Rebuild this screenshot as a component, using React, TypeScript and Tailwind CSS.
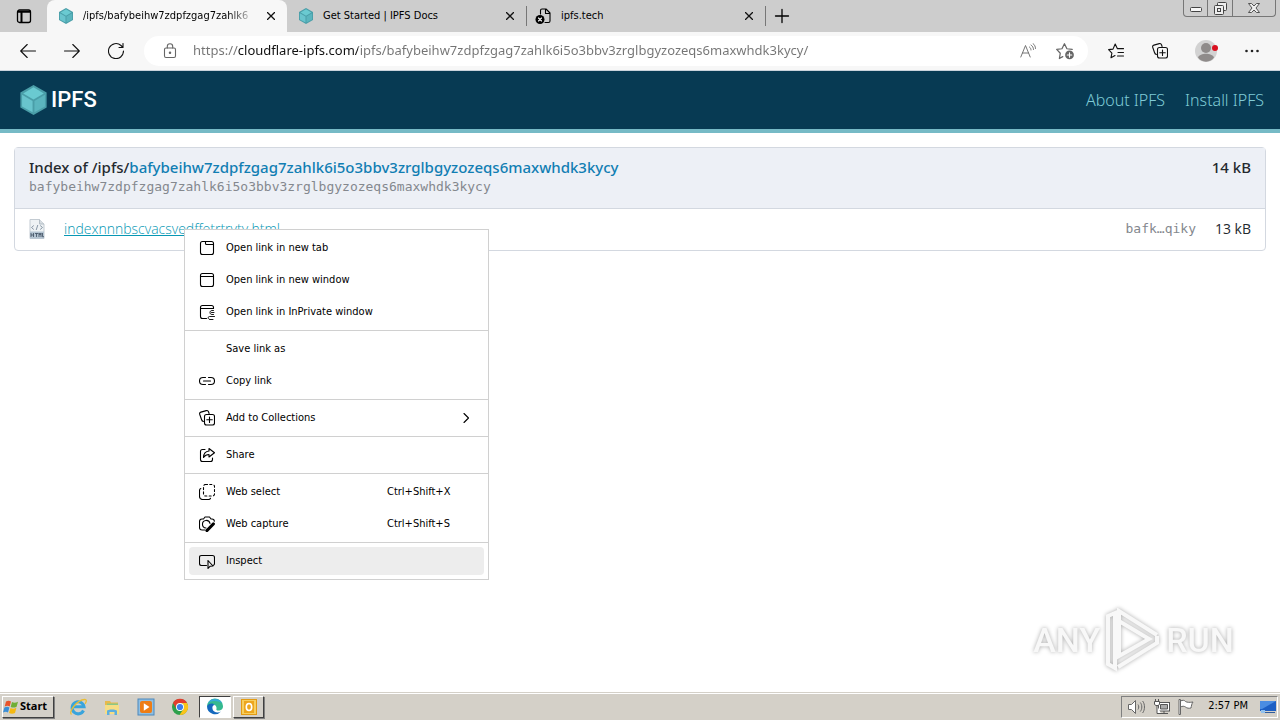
import type { ReactNode } from "react";

const UI = "font-['DejaVu_Sans_Condensed','Noto_Sans',sans-serif]";
const HASH = "bafybeihw7zdpfzgag7zahlk6i5o3bbv3zrglbgyzozeqs6maxwhdk3kycy";

function Icon({ children, size = "size-4" }: { children: ReactNode; size?: string }) {
  return (
    <svg viewBox="0 0 16 16" className={`${size} shrink-0`} fill="none" stroke="currentColor" strokeWidth="1.1" strokeLinecap="round" strokeLinejoin="round" aria-hidden="true">
      {children}
    </svg>
  );
}

function Cube({ className }: { className: string }) {
  return (
    <svg viewBox="0 0 28 32" className={`${className} shrink-0`} aria-hidden="true">
      <path d="M14 0 28 8v16L14 32 0 24V8z" fill="#4a9ea8" />
      <path d="M14 2.500 25 9 14 15.500 3 9z" fill="#6acad1" />
      <path d="M1.800 10.500 13 17v12L1.800 22.800z" fill="#69c4cd" />
      <path d="M26.200 10.500 15 17v12l11.200-6.200z" fill="#5bb5be" />
    </svg>
  );
}

function Collections({ size = "size-4" }: { size?: string }) {
  return (
    <Icon size={size}>
      <path d="M4.500 11.500c-1.200-.2-1.700-.9-2-2L.7 4.200c-.3-1 .2-1.800 1.200-2.100L7.300.6c1-.2 1.800.2 2.200 1.200l.6 1.700" />
      <rect x="5.500" y="4.500" width="10" height="10.500" rx="2" />
      <path d="M10.500 7v5.500M7.750 9.750h5.500" />
    </Icon>
  );
}

function CloseTab({ label }: { label: string }) {
  return (
    <button aria-label={label} className="flex size-4 shrink-0 items-center justify-center">
      <svg viewBox="0 0 8 8" className="size-2" stroke="#111" strokeWidth="1.300" aria-hidden="true"><path d="m0 0 8 8M8 0 0 8" /></svg>
    </button>
  );
}

function TabStrip() {
  return (
    <div className="flex h-8 bg-[#cdcdcd] text-[11px] text-black">
      <button aria-label="Tab actions" className="flex w-[47px] items-center justify-center">
        <Icon><rect x="1.500" y="2" width="13" height="12.500" rx="2" strokeWidth="1.300" /><path d="M2 3.800h12M5.500 4v10" strokeWidth="2" /></Icon>
      </button>
      <div role="tablist" className="flex">
        <div role="tab" aria-selected="true" className="flex w-60 items-center gap-2 rounded-t-lg bg-[#f7f7f7] pr-2 pl-2.5">
          <Cube className="h-4 w-[18px]" />
          <span className="min-w-0 flex-1 overflow-hidden whitespace-nowrap [mask-image:linear-gradient(to_right,black_85%,transparent)]">/ipfs/bafybeihw7zdpfzgag7zahlk6</span>
          <CloseTab label="Close tab" />
        </div>
        <div role="tab" aria-selected="false" className="flex w-[239px] items-center gap-2 pr-2 pl-2.5">
          <Cube className="h-4 w-[18px]" />
          <span className="flex-1">Get Started | IPFS Docs</span>
          <CloseTab label="Close tab" />
        </div>
        <div className="my-1.5 w-px bg-[#777]" />
        <div role="tab" aria-selected="false" className="flex w-[238px] items-center gap-2.5 pr-2 pl-2">
          <Icon>
            <path d="M5.500 6V2.500c0-1 .5-1.500 1.500-1.500h4l4 4v8c0 1-.5 1.500-1.500 1.500H10M10.500 1.500v4H15" />
            <circle cx="5" cy="11.500" r="4.500" fill="#000" stroke="none" />
            <path d="m3.500 10 3 3M6.500 10l-3 3" stroke="#fff" />
          </Icon>
          <span className="flex-1">ipfs.tech</span>
          <CloseTab label="Close tab" />
        </div>
        <div className="my-1.5 w-px bg-[#777]" />
      </div>
      <button aria-label="New tab" className="flex w-8 items-center justify-center">
        <Icon><path d="M8 1.500v13M1.500 8h13" strokeWidth="1.300" /></Icon>
      </button>
      <div className="mr-1 ml-auto flex h-[17px] divide-x divide-[#777] rounded-b border border-t-0 border-[#777] text-[#444]">
        <button aria-label="Minimize" className="flex w-6 items-end justify-center pb-1">
          <svg viewBox="0 0 12 5" className="h-[5px] w-3" aria-hidden="true"><rect x=".5" y=".5" width="11" height="4" rx="1" fill="#f7f7f7" stroke="currentColor" /></svg>
        </button>
        <button aria-label="Restore" className="flex w-[25px] items-center justify-center">
          <svg viewBox="0 0 13 13" className="size-[13px]" fill="#eee" stroke="currentColor" aria-hidden="true"><rect x="3.500" y=".5" width="9" height="8" rx="1" /><rect x=".5" y="3.500" width="9" height="9" rx="1" /><rect x="3.500" y="6.500" width="3" height="3" /></svg>
        </button>
        <button aria-label="Close" className="flex w-[42px] items-center justify-center">
          <svg viewBox="0 0 12 10" className="h-2.5 w-3" fill="#eee" stroke="currentColor" strokeWidth=".9" aria-hidden="true"><path d="M.5.5h3L6 3 8.500.5h3L8 5l3.500 4.500h-3L6 7 3.500 9.500h-3L4 5z" /></svg>
        </button>
      </div>
    </div>
  );
}

function Toolbar() {
  return (
    <div className="flex h-[39px] items-center border-b border-[#c9d3dc] bg-[#f7f7f7] pr-5 pl-5 text-[#111]">
      <div className="flex gap-7">
        <button aria-label="Back"><Icon><path d="M15.500 8H.7M7.200 1.500.7 8l6.500 6.500" /></Icon></button>
        <button aria-label="Forward"><Icon><path d="M.5 8h14.800M8.800 1.500 15.300 8l-6.500 6.500" /></Icon></button>
        <button aria-label="Refresh"><Icon><path d="M15.500 8A7.500 7.500 0 1 1 13 2.500l1.500 1.500M15 .5v4h-4" /></Icon></button>
      </div>
      <div className="ml-5 flex h-[30px] min-w-0 flex-1 items-center rounded-full bg-white pr-3.5 pl-[18px] text-[#666]">
        <Icon><rect x="2.500" y="5" width="11" height="9.500" rx="1.500" /><path d="M5.300 5V3.400a2.700 2.700 0 0 1 5.400 0V5" /><circle cx="8" cy="9.700" r=".7" fill="currentColor" /></Icon>
        <input
          aria-label="Address"
          defaultValue={`https://cloudflare-ipfs.com/ipfs/${HASH}/`}
          className="ml-[15px] min-w-0 flex-1 bg-[linear-gradient(to_right,#747474_45px,#111_45px,#111_165px,#747474_165px)] bg-clip-text font-['Noto_Sans',sans-serif] text-[13px] text-transparent outline-none"
        />
        <div className="flex gap-5">
          <button aria-label="Read aloud"><Icon><path d="m.8 14 4.700-11.500L10.200 14M2.500 10h6M9.500 4c1 .8 1.500 1.800 1.500 3M11 2c1.500 1 2.500 2.500 2.500 4.500M13 .5c1.600 1.300 2.500 3 2.500 5" strokeWidth=".9" /></Icon></button>
          <button aria-label="Add to favorites">
            <Icon size="size-[18px]"><path d="m6 13-3 1.700.8-4.700L.6 6.600l4.700-.6L7.500 1.500 9.700 6l4.700.6" /><circle cx="12" cy="11.500" r="3.900" fill="#666" stroke="none" /><path d="M12 9.500v4M10 11.500h4" stroke="#fff" strokeWidth="1" /></Icon>
          </button>
        </div>
      </div>
      <div className="ml-5 flex items-center">
        <button aria-label="Favorites"><Icon><path d="m7 12.500-4 2.200.9-4.600L.6 6.600l4.400-.5L7.200 1l2.100 4.600h6.200M10 9.500h5.500M9.500 13h6" /></Icon></button>
        <button aria-label="Collections" className="ml-7"><Collections /></button>
        <button aria-label="Profile" className="ml-[26px]">
          <svg viewBox="0 0 24 24" className="size-6" aria-hidden="true">
            <circle cx="12" cy="12" r="11" fill="#d2d2d2" /><circle cx="12" cy="9" r="5" fill="#8f8b8a" /><path d="M4 18.500c2-5 14-5 16 0-3 5.500-13 5.500-16 0z" fill="#8f8b8a" />
            <circle cx="21" cy="9" r="3" fill="#d9101f" />
          </svg>
        </button>
        <button aria-label="Settings and more" className="ml-[26px]">
          <svg viewBox="0 0 16 16" className="size-4" fill="#222" aria-hidden="true"><circle cx="2.500" cy="8" r="1.300" /><circle cx="8" cy="8" r="1.300" /><circle cx="13.500" cy="8" r="1.300" /></svg>
        </button>
      </div>
    </div>
  );
}

const groups: { label: string; keys?: string; more?: boolean; active?: boolean; icon: ReactNode }[][] = [
  [
    { label: "Open link in new tab", icon: <Icon><rect x="1.500" y="1.500" width="13" height="13" rx="2" /><path d="M6.500 1.500v2c0 .7.300 1 1 1h7" /></Icon> },
    { label: "Open link in new window", icon: <Icon><rect x="1.500" y="1.500" width="13" height="13" rx="2" /><path d="M1.500 4.500h13" /></Icon> },
    { label: "Open link in InPrivate window", icon: <Icon><path d="M7.500 14.500h-4c-1.300 0-2-.7-2-2v-9c0-1.300.7-2 2-2h9c1.300 0 2 .7 2 2v1M1.500 4.500h13" /><path d="M14.500 6.500h-1.500c-2.700 0-2.700 4 0 4h1.500M12.500 8.500H15M15.500 12.500h-5c-2 0-1.700 3 .5 3h3" strokeWidth=".9" /></Icon> },
  ],
  [
    { label: "Save link as", icon: <span className="size-4 shrink-0" /> },
    { label: "Copy link", icon: <Icon><path d="M6.500 4.500H4a3.500 3.500 0 0 0 0 7h2.500M9.500 4.500H12a3.500 3.500 0 0 1 0 7H9.500M4.500 8h7" /></Icon> },
  ],
  [{ label: "Add to Collections", more: true, icon: <Collections /> }],
  [{ label: "Share", icon: <Icon><path d="M6 2.500H3.500c-1.300 0-2 .7-2 2v8c0 1.300.7 2 2 2h8c1.300 0 2-.7 2-2V11M10 1.500l5.500 4.200L10 10V7.500c-2.500 0-4 .7-5.500 3 .1-4 2-6.200 5.500-6.500z" /></Icon> }],
  [
    { label: "Web select", keys: "Ctrl+Shift+X", icon: <Icon><path d="M1.800 4.500c-.8.300-1.300 1-1.300 2v6c0 1.900 1.100 3 3 3h6c1 0 1.700-.5 2-1.300" /><rect x="4.500" y=".5" width="11" height="11.500" rx="2" strokeDasharray="2 2.300" /></Icon> },
    { label: "Web capture", keys: "Ctrl+Shift+S", icon: <Icon><path d="M6 14H3c-1.500 0-2.500-1-2.500-2.500v-6C.5 4 1.500 3 3 3h1.500L6 1h4.500L12 3h1c1.500 0 2.300.8 2.300 2.300M11 7.500A3.800 3.800 0 1 0 7 12" /><path d="M8 14.500 14.300 8" strokeWidth="3.200" /></Icon> },
  ],
  [{ label: "Inspect", active: true, icon: <Icon><path d="M7.500 12.500h-5c-1.300 0-2-.7-2-2v-6c0-1.300.7-2 2-2h11c1.300 0 2 .7 2 2v6c0 .8-.3 1.400-1 1.700M9 7.500v8l2-2.200 3-.3z" /></Icon> }],
];

function ContextMenu() {
  return (
    <div role="menu" className="absolute top-[229px] left-[184px] w-[305px] divide-y divide-[#d0d0d0] border border-[#d0d0d0] bg-white text-[11px] text-black">
      {groups.map((group) => (
        <div key={group[0].label} role="group" className="px-1 py-0.5">
          {group.map((item) => (
            <div key={item.label} className="py-0.5">
              <button role="menuitem" className={`flex h-7 w-full items-center rounded px-2.5 text-left ${item.active ? "bg-[#ededed]" : ""}`}>
                {item.icon}
                <span className="ml-[11px] flex-1">{item.label}</span>
                {item.keys && <span className="w-[87px]">{item.keys}</span>}
                {item.more && <Icon><path d="m6 3.500 4.500 4.500-4.500 4.500" /></Icon>}
              </button>
            </div>
          ))}
        </div>
      ))}
    </div>
  );
}

function Page() {
  return (
    <>
      <header className="flex h-[62px] items-center justify-between border-b-4 border-[#76bac6] bg-[#073a53] px-4 font-['Noto_Sans',sans-serif] font-light">
        <a href="#ipfs" className="flex items-center gap-1 pl-1 text-white">
          <Cube className="h-[30px] w-[27px]" />
          <span className="font-['Roboto',sans-serif] text-[22px] leading-7 font-medium">IPFS</span>
        </a>
        <nav className="flex gap-5 text-base text-[#7fcbd6]">
          <a href="#about">About IPFS</a>
          <a href="#install">Install IPFS</a>
        </nav>
      </header>
      <main className="flex-1 px-3.5 pt-3.5">
        <section className="rounded border border-[#d3d8e0] text-[#24292e]">
          <div className="flex h-[61px] justify-between border-b border-[#d3d8e0] bg-[#edf0f6] px-3.5 pt-[9px] font-['Noto_Sans',sans-serif] text-[15px] leading-5 font-medium">
            <div>
              <h1>Index of /ipfs/<a href="#root" className="text-[#117eb3]">{HASH}</a></h1>
              <div className="font-['DejaVu_Sans_Mono',monospace] text-[13px] font-normal text-[#84888e]">{HASH}</div>
            </div>
            <div>14 kB</div>
          </div>
          <table className="w-full">
            <tbody>
              <tr className="h-[41px] [&>td]:pb-0.5">
                <td className="w-[49px] pl-3.5">
                  <svg viewBox="0 0 16 20" className="h-5 w-4" aria-hidden="true">
                    <path d="M1 .5h9.500L15 5v14.500H1z" fill="#eef2f4" stroke="#c3cbd2" /><path d="M10.500.5V5H15" fill="#d7dde2" stroke="#b4bec6" />
                    <path d="m4.800 6.500-2.300 2 2.300 2M11.200 6.500l2.300 2-2.300 2M8.800 6l-1.600 5" fill="none" stroke="#8796a5" />
                    <rect x="1" y="12.500" width="14" height="7" fill="#b4c4d1" />
                    <path d="M2 14v4M4.500 14v4M2 16h2.500M6 14.500h3M7.500 14.500V18M10 18v-4l1 2 1-2v4M13.500 14v3.700h1.500" fill="none" stroke="#3c4d5e" strokeWidth=".8" />
                  </svg>
                </td>
                <td className="font-['Open_Sans','Noto_Sans',sans-serif] text-sm font-light text-[#0798b4]"><a href="#file" className="underline">indexnnnbscvacsvedffetrtrvty.html</a></td>
                <td className="text-right font-['DejaVu_Sans_Mono',monospace] text-[13px] text-[#84888e]">bafk…qiky</td>
                <td className="w-[69px] pr-3.5 text-right font-['Open_Sans','Noto_Sans',sans-serif] text-sm">13 kB</td>
              </tr>
            </tbody>
          </table>
        </section>
      </main>
    </>
  );
}

function Watermark() {
  return (
    <div aria-hidden="true" className="absolute right-[46px] bottom-12 flex items-center gap-1 font-['Roboto',sans-serif] text-[34px] leading-none font-medium text-[#f8f8f8] drop-shadow-[0_0_2px_#aaa]">
      <span>ANY</span>
      <svg viewBox="0 0 58 64" className="h-16 w-[58px]" fill="none" stroke="currentColor" strokeWidth="4">
        <path d="M4 8v48l7 4V5zM15 44V3l38 24" /><path d="M15 13v35l30-17z" /><path d="M14 59 53 35v-7" />
      </svg>
      <span>RUN</span>
    </div>
  );
}

function Taskbar() {
  const raised = "border border-t-white border-l-white border-r-[#404040] border-b-[#404040] shadow-[1px_1px_0_#808080]";
  return (
    <footer className="flex h-7 items-center border-t border-[#d4d0c8] bg-[#d4d0c8] pl-0.5 text-[11px] text-black shadow-[inset_0_1px_0_white]">
      <button className={`flex h-[22px] w-[52px] items-center gap-px font-['Noto_Sans',sans-serif] font-bold ${raised}`}>
        <svg viewBox="0 0 16 16" className="size-4" aria-hidden="true">
          <path d="M3 2.500c2-1.200 3.500-1 5 0L6.700 7.500c-1.500-1-3-1-5 0z" fill="#e8532b" /><path d="M9 3c1.700.9 3.500.9 6-.3l-1.400 5c-2 1-3.900 1.200-5.900.2z" fill="#6fae35" />
          <path d="M1.400 8.500c2-1 3.500-1 5 0L5 13.500c-1.500-1-3-1-5 0z" fill="#3a8ed6" /><path d="M7.500 9c1.800 1 3.700.9 5.900-.2L12 14c-2 1-4 1-6 0z" fill="#f5b912" />
        </svg>
        Start
      </button>
      <div className="ml-[15px] flex items-center">
        <button aria-label="Internet Explorer" className="flex w-[34px]">
          <svg viewBox="0 0 18 18" className="size-[18px]" fill="none" aria-hidden="true"><path d="M14.500 12.500A6 6 0 1 1 15 8.700H5" stroke="#39a4dc" strokeWidth="3" /><path d="M2.500 16.500C-1 14 8 2 15.500 1.500c3-.2 1.500 3 .5 4.500" stroke="#e9bd35" strokeWidth="1.300" /></svg>
        </button>
        <button aria-label="Explorer" className="flex w-[34px]">
          <svg viewBox="0 0 18 18" className="size-[18px]" aria-hidden="true"><path d="M2 3h5l1 1.500h7V15H2z" fill="#e7b94c" /><path d="M4 5.500h11v6H4z" fill="#8ac889" /><path d="M2 7h14v9H2z" fill="#f6dd84" /><path d="M4 17v-4c0-2 10-2 10 0v4h-2.500v-3h-5v3z" fill="#5caee0" /></svg>
        </button>
        <button aria-label="Media Player" className="flex w-[34px]">
          <svg viewBox="0 0 18 18" className="size-[18px]" aria-hidden="true"><rect x="1" y="1" width="16" height="16" fill="#8fbfe2" stroke="#4c87bb" /><rect x="3" y="3" width="12" height="12" rx="2" fill="#ee7d15" /><path d="M6.800 5.200 12.500 9l-5.700 3.800z" fill="#fff" /></svg>
        </button>
        <button aria-label="Chrome" className="flex w-7">
          <svg viewBox="0 0 18 18" className="size-[18px]" aria-hidden="true"><circle cx="9" cy="9" r="8" fill="#2da04c" /><path d="M2 5A8 8 0 0 1 16 5H9a4 4 0 0 0-3.500 6z" fill="#e23d2e" /><path d="M16 5a8 8 0 0 1-7.500 12l4-6A4 4 0 0 0 9 5z" fill="#fbc419" /><circle cx="9" cy="9" r="4" fill="#fff" /><circle cx="9" cy="9" r="3.100" fill="#3b7ded" /></svg>
        </button>
        <button aria-label="Edge" className="flex h-[22px] w-8 items-center justify-center border border-t-[#404040] border-r-white border-b-white border-l-[#404040] bg-white">
          <svg viewBox="0 0 18 18" className="size-[18px]" aria-hidden="true"><path d="M1 9a8 8 0 0 1 16-1c.2 3-2 4.500-4.500 4.500-2 0-2.500-.8-2-1.800C11 8 8 5.500 5 6.500 3 7 1.500 8 1 9z" fill="#35b98f" /><path d="M1 8.500C2 5 7 4.500 9 7c-2 0-3 1.500-2.500 4 .7 3 5 4.500 8.500 2.500A8 8 0 0 1 1 8.500z" fill="#1469bd" /><path d="M1.500 6A8 8 0 0 1 9 1c4 0 6 2 7.300 4C12 3 5 1.500 1.500 6z" fill="#36a9d8" /></svg>
        </button>
        <button aria-label="Outlook" className={`ml-0.5 flex h-[22px] w-[31px] items-center justify-center ${raised}`}>
          <svg viewBox="0 0 16 16" className="size-4" aria-hidden="true"><rect x=".5" y=".5" width="15" height="15" fill="#f7cf5e" stroke="#e39b12" /><rect x="3" y="2" width="10" height="12" fill="#eda61d" /><ellipse cx="8" cy="8" rx="2.700" ry="3.500" fill="none" stroke="#fff" strokeWidth="1.600" /></svg>
        </button>
      </div>
      <div className="mr-0.5 ml-auto flex h-[22px] items-center border border-t-[#808080] border-r-white border-b-white border-l-[#808080] pl-1.5">
        <svg viewBox="0 0 18 16" className="mr-2 h-4 w-[18px]" fill="#fff" stroke="#666" aria-hidden="true"><path d="M.5 5.500h3l4-4v13l-4-4h-3z" /><path d="M10 5.500c1 1.500 1 3.500 0 5M12.300 3.500c2 2.500 2 6.500 0 9M14.600 2c2.500 3 2.500 9 0 12" fill="none" /></svg>
        <svg viewBox="0 0 16 16" className="mr-2 size-4" fill="#fff" stroke="#555" aria-hidden="true"><rect x="4.500" y="3.500" width="11" height="8.500" /><path d="M6.500 5.500h7V10h-7z" fill="#aaa" /><path d="M.5 2.500h5v3l-1.500 1H2l-1.500-1zM1.500 0v2.500M4.500 0v2.500M3 6.500v8h4M7 14.500h7M10 12v2.500" /></svg>
        <svg viewBox="0 0 16 16" className="mr-3.5 size-4" fill="#fff" stroke="#666" aria-hidden="true"><path d="M1 .5h1.500v15H1zM2.500 2c2-1 4-1 5 .5 1.500 1 4.500 1 7.500.5-1.500 2-1.500 4-2 6-2 .5-4 .3-5.500-1-1.500-1-3-1-5 0z" /></svg>
        <time>2:57 PM</time>
        <svg viewBox="0 0 16 14" className="mr-px ml-3 h-3.5 w-4" aria-hidden="true"><path d="M0 1h16v10H0z" fill="#1d5fc4" /><path d="M0 1h16L2 9H0z" fill="#4b8de2" /><path d="M1 12.500h14" stroke="#315d9c" /><path d="M1 10h4v3H1z" fill="#91c2ef" /></svg>
      </div>
    </footer>
  );
}

export default function App() {
  return (
    <div className={`relative flex min-h-screen flex-col bg-white ${UI}`}>
      <TabStrip />
      <Toolbar />
      <Page />
      <ContextMenu />
      <Watermark />
      <Taskbar />
    </div>
  );
}
